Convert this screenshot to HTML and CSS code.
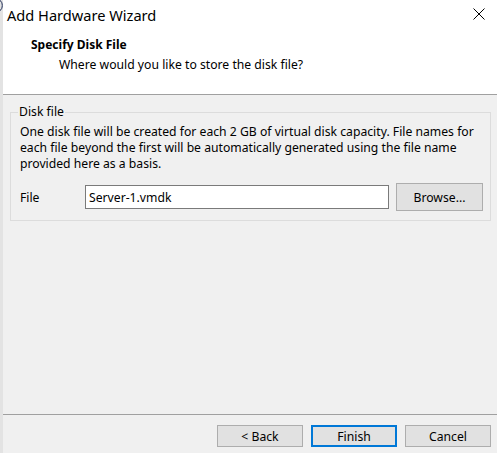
FILE: index.html
```html
<!DOCTYPE html>
<html>
<head>
<meta charset="utf-8">
<title>Add Hardware Wizard</title>
<link rel="stylesheet" href="styles.css">
</head>
<body>
<div class="window">
  <svg class="glyph-fragment" width="4" height="11" viewBox="0 0 4 11"><path d="M0 0.5 C3 2 3 9 0 10.5" fill="none" stroke="#1c2a55" stroke-width="1"/></svg>
  <header class="header">
    <div class="titlebar">
      <span class="title">Add Hardware Wizard</span>
      <svg class="close" width="12" height="12" viewBox="0 0 12 12"><path d="M0.5 0.5 L11.5 11.5 M11.5 0.5 L0.5 11.5" stroke="#000" stroke-width="1" fill="none"/></svg>
    </div>
    <div class="page-title">Specify Disk File</div>
    <div class="page-subtitle">Where would you like to store the disk file?</div>
  </header>
  <main class="content">
    <fieldset class="group">
      <legend class="group-legend">Disk file</legend>
      <p class="desc">One disk file will be created for each 2 GB of virtual disk capacity. File names for each file beyond the first will be automatically generated using the file name provided here as a basis.</p>
      <div class="file-row">
        <label class="file-label" for="file">File</label>
        <input id="file" class="file-input" type="text" value="Server-1.vmdk">
        <button class="btn browse" type="button">Browse...</button>
      </div>
    </fieldset>
  </main>
  <footer class="footer">
    <button class="btn" type="button">&lt; Back</button>
    <button class="btn btn-default" type="button">Finish</button>
    <button class="btn" type="button">Cancel</button>
  </footer>
</div>
</body>
</html>
```

FILE: styles.css
```css
* { box-sizing: border-box; }
html, body { margin: 0; padding: 0; }
body {
  width: 497px;
  height: 453px;
  overflow: hidden;
  background: #f0f0f0;
  font-family: "Noto Sans", "Liberation Sans", sans-serif;
  font-size: 12.2px;
  color: #000;
}
.window {
  position: relative;
  height: 453px;
  border-left: 3px solid #e3e3e3;
  display: flex;
  flex-direction: column;
}
.glyph-fragment {
  position: absolute;
  left: -3px;
  top: 0;
}
.header {
  background: #fff;
  height: 95px;
  border-bottom: 1px solid #a0a0a0;
  flex: none;
}
.titlebar {
  height: 30px;
  display: flex;
  justify-content: space-between;
  padding-left: 4px;
}
.title {
  font-size: 14.6px;
  line-height: 30px;
}
.close {
  margin-top: 8px;
  margin-right: 12px;
}
.page-title {
  margin-top: 7px;
  padding-left: 28px;
  font-weight: bold;
  font-size: 12px;
  line-height: 16px;
}
.page-subtitle {
  margin-top: 4px;
  padding-left: 56px;
  line-height: 16px;
}
.content {
  flex: 1;
  padding: 9px 6px 0 7px;
}
.group {
  margin: 0;
  min-width: 0;
  border: 1px solid #dcdcdc;
  padding: 4px 7px 9px 9px;
}
.group-legend {
  padding: 0 1px;
  margin-left: -2px;
  line-height: 16px;
}
.desc {
  margin: 0;
  line-height: 16px;
}
.file-row {
  display: flex;
  align-items: center;
  margin-top: 11px;
}
.file-label {
  width: 65px;
  flex: none;
}
.file-input {
  width: 304px;
  height: 24px;
  flex: none;
  margin: 0;
  border: 1px solid #7a7a7a;
  padding: 0 3px;
  font: inherit;
  color: #000;
  background: #fff;
  outline: none;
}
.btn {
  font: inherit;
  color: #000;
  background: #e1e1e1;
  border: 1px solid #adadad;
  width: 86px;
  height: 22px;
  padding: 0;
  margin: 0;
  flex: none;
}
.browse {
  margin-left: 7px;
  width: 87px;
  height: 28px;
}
.btn-default {
  border: 2px solid #0078d7;
}
.footer {
  flex: none;
  height: 39px;
  border-top: 1px solid #a0a0a0;
  padding: 10px 6px 0 0;
  display: flex;
  justify-content: flex-end;
  gap: 8px;
}
```
